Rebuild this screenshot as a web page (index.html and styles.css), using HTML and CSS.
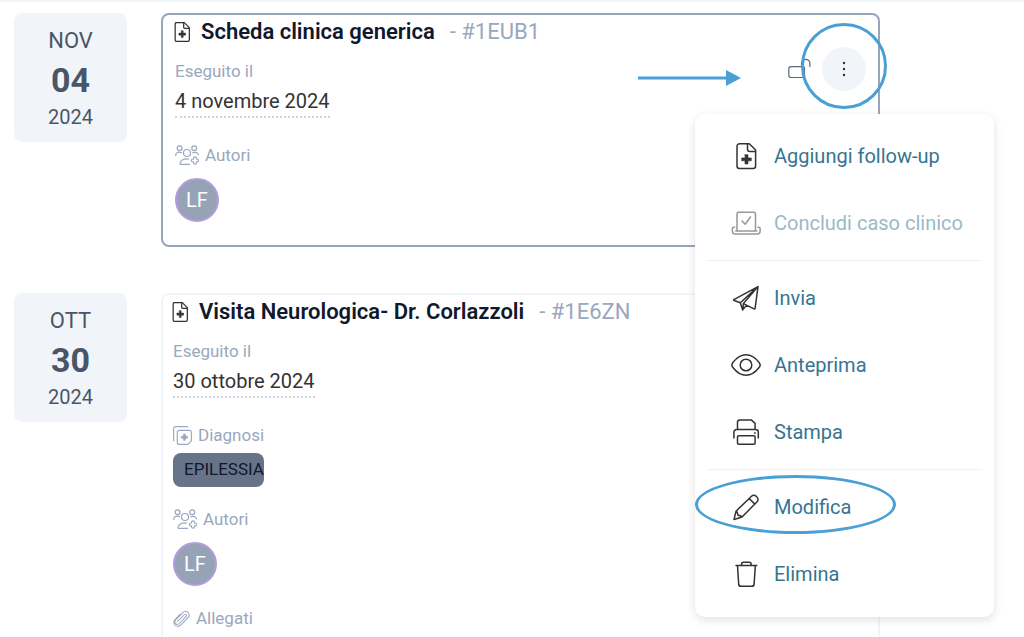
FILE: index.html
```html
<!DOCTYPE html>
<html lang="it">
<head>
<meta charset="utf-8">
<title>Schede cliniche</title>
<link rel="stylesheet" href="styles.css">
</head>
<body>
<svg class="sprite" aria-hidden="true">
  <symbol id="file-plus" viewBox="0 0 24 24">
    <path d="M3.8 2.3A1.6 1.6 0 0 1 5.4.7h9.4l6 6v15a1.6 1.6 0 0 1-1.6 1.600H5.400a1.600 1.600 0 0 1-1.600-1.600z"/>
    <path d="M14 .8v5.400a1.300 1.300 0 0 0 1.300 1.300h5.400"/>
    <path class="solid" d="M11.200 10.400h2.200v2.900h2.900v2.500h-2.900v2.900h-2.200v-2.900H8.300v-2.500h2.900z"/>
  </symbol>
  <symbol id="users-plus" viewBox="0 0 24 20">
    <circle cx="4.600" cy="3.200" r="2.400"/><circle cx="19.200" cy="3.200" r="2.400"/><circle cx="12" cy="8" r="3.500"/>
    <path d="M.6 10.400c0-3 3-4 6-2.600M23.400 9.700c-.6-2.300-3.300-3-5.700-1.900M14.500 19.300H5.600c-.5 0-.6-.3-.5-.8.6-4 4.500-5.400 8.400-4.300"/>
    <path d="M18.500 13.300a1.500 1.500 0 0 1 3 0v.7h.6a1.400 1.400 0 0 1 0 2.900h-.6v.8a1.500 1.500 0 0 1-3 0v-.8h-.6a1.400 1.400 0 0 1 0-2.900h.6z"/>
  </symbol>
  <symbol id="diagnosis" viewBox="0 0 20 20">
    <path d="M.7 15.500V2.700a2 2 0 0 1 2-2h12.800"/>
    <path d="M6.500 4.600h10.800a2 2 0 0 1 2 2v9l-3.700 3.700H6.500a2 2 0 0 1-2-2V6.600a2 2 0 0 1 2-2z"/>
    <path class="solid" d="M11 8.500h2v2.300h2.300v2H13v2.300h-2v-2.300H8.700v-2H11z"/>
  </symbol>
  <symbol id="clip" viewBox="0 0 20 20">
    <path d="M5.400 13.500l7.800-7.900a1.500 1.500 0 0 1 2.200 2.200l-8 8.100a3 3 0 0 1-4.300-4.200l8.400-8.700a4.200 4.200 0 0 1 6.100 5.900l-7.900 8.200a6 6 0 0 1-3.400 1.900c-3.500.6-6-2.400-5.100-5.700.3-1.100.9-1.900 1.700-2.700l5.200-5.400"/>
  </symbol>
</svg>

<main class="page">
  <section class="entry">
    <time class="date" datetime="2024-11-04"><span class="month">NOV</span><strong class="day">04</strong><span class="year">2024</span></time>
    <article class="card card-active">
      <div class="content">
        <h2 class="title"><svg class="icon title-icon"><use href="#file-plus"/></svg>Scheda clinica generica <span class="code">- #1EUB1</span></h2>
        <div class="label">Eseguito il</div>
        <div class="value">4 novembre 2024</div>
        <div class="label group"><svg class="icon users-icon"><use href="#users-plus"/></svg>Autori</div>
        <div class="avatar">LF</div>
      </div>
      <div class="actions">
        <svg class="icon lock" viewBox="0 0 24 24"><path d="M15 9.600H3A2.200 2.200 0 0 0 .8 11.800v6.500a2.200 2.200 0 0 0 2.200 2.200h12a1.500 1.500 0 0 0 1.500-1.500v-8a1.500 1.500 0 0 0-1.500-1.400z"/><path d="M13.500 9.500V6.500a4.200 4.200 0 0 1 8.400 0v3"/></svg>
        <button class="more" type="button" aria-label="Altre azioni"><svg class="dots" viewBox="0 0 4 16"><circle cx="2" cy="2" r="1.200"/><circle cx="2" cy="8" r="1.200"/><circle cx="2" cy="14" r="1.200"/></svg></button>
        <svg class="arrow" viewBox="0 0 103 16"><path d="M0 6.500h88V0l15 8-15 8V9.500H0z"/></svg>
        <span class="ring"></span>
        <nav class="menu">
          <button class="item" type="button"><svg class="icon" viewBox="0 0 30 30"><path d="M6 5.200A2.500 2.500 0 0 1 8.500 2.700h9.800l6.300 6.300v16a2.500 2.500 0 0 1-2.500 2.500H8.500A2.500 2.500 0 0 1 6 25z"/><path d="M16.500 2.900v5.400a2.300 2.300 0 0 0 2.300 2.300h5.700"/><path class="solid" d="M14 13.700h3v3.200h3.300v2.900H17V23h-3v-3.200h-3.300v-2.900H14z"/></svg>Aggiungi follow-up</button>
          <button class="item" type="button" disabled><svg class="icon" viewBox="0 0 30 30"><path d="M6 23V6.300a2 2 0 0 1 2-2h14.500a2 2 0 0 1 2 2V23M4.700 23h21.100M3.500 19.200H2.700a1.300 1.300 0 0 0-1.300 1.300v2.700a2.700 2.700 0 0 0 2.700 2.700h22.300a2.700 2.700 0 0 0 2.700-2.700v-2.700a1.300 1.300 0 0 0-1.300-1.300h-.8M11 13l3.200 3.300L19.500 9"/></svg>Concludi caso clinico</button>
          <hr class="divider">
          <button class="item" type="button"><svg class="icon" viewBox="0 0 30 30"><path d="M27 3.600L3.300 16.300a.6.600 0 0 0 0 1.200l6 2.200L27 3.600l-14.600 17L23 25.900a.8.800 0 0 0 1.100-.6L27 3.600M9.300 19.700l2.400 7.200 3.800-4.700M12.400 20.600l-.7 6.300"/></svg>Invia</button>
          <button class="item" type="button"><svg class="icon" viewBox="0 0 30 30"><path d="M15 4.700c5.200 0 9.900 3.700 12.900 7.500a4.200 4.200 0 0 1 0 5.600C24.900 21.600 20.200 25.300 15 25.300S5.100 21.600 2.100 17.800a4.200 4.200 0 0 1 0-5.600C5.100 8.400 9.800 4.700 15 4.700z"/><circle cx="15" cy="15" r="5.800"/></svg>Anteprima</button>
          <button class="item" type="button"><svg class="icon" viewBox="0 0 30 30"><path d="M6.500 12.500V5.200a2.300 2.300 0 0 1 2.300-2.300h11.500l3.800 3.500v6.100M2.900 21v-5.700a2.700 2.700 0 0 1 2.700-2.700h19a2.700 2.700 0 0 1 2.700 2.700V21M7.700 18.800h15.200a1.200 1.200 0 0 1 1.200 1.200v6a1.200 1.200 0 0 1-1.200 1.200H7.700A1.200 1.200 0 0 1 6.500 26v-6a1.200 1.200 0 0 1 1.200-1.200z"/><circle class="solid" cx="23.700" cy="16" r=".6"/></svg>Stampa</button>
          <hr class="divider">
          <button class="item" type="button"><svg class="icon" viewBox="0 0 30 30"><path d="M20.500 4.200a3.200 3.200 0 0 1 4.600 0l1 1a3.200 3.200 0 0 1 0 4.600L11 25l-8 2.500 2-8.300zM18.200 6.500l5.600 5.600M5 19.200l1.200 1 .8 3 3 .8 1 1"/></svg>Modifica<span class="oval"></span></button>
          <button class="item" type="button"><svg class="icon" viewBox="0 0 30 30"><path d="M5 6.600h20.800M10.600 6.500V5.300a2 2 0 0 1 2-2h5.600a2 2 0 0 1 2 2v1.200M6.500 6.800l1.200 18.300a2.300 2.300 0 0 0 2.300 2.200h10.800a2.300 2.300 0 0 0 2.300-2.200l1.200-18.300"/></svg>Elimina</button>
        </nav>
      </div>
    </article>
  </section>

  <section class="entry">
    <time class="date" datetime="2024-10-30"><span class="month">OTT</span><strong class="day">30</strong><span class="year">2024</span></time>
    <article class="card">
      <div class="content">
        <h2 class="title"><svg class="icon title-icon"><use href="#file-plus"/></svg>Visita Neurologica- Dr. Corlazzoli <span class="code">- #1E6ZN</span></h2>
        <div class="label">Eseguito il</div>
        <div class="value">30 ottobre 2024</div>
        <div class="label group"><svg class="icon small-icon"><use href="#diagnosis"/></svg>Diagnosi</div>
        <div class="chip">EPILESSIA</div>
        <div class="label group"><svg class="icon users-icon"><use href="#users-plus"/></svg>Autori</div>
        <div class="avatar">LF</div>
        <div class="label group"><svg class="icon clip-icon"><use href="#clip"/></svg>Allegati</div>
      </div>
    </article>
  </section>
</main>
</body>
</html>
```
FILE: styles.css
```css
* { box-sizing: border-box; }

body {
  margin: 0;
  background: #fff;
  color: #333;
  font-family: Roboto, "Liberation Sans", sans-serif;
  font-size: 20px;
}

.sprite { position: absolute; width: 0; height: 0; }

.page {
  display: flex;
  flex-direction: column;
  gap: 46px;
  height: 100vh;
  overflow: hidden;
  padding: 11px 144px 0 14px;
  border-top: 2px solid #f1f5fa;
}

.entry {
  display: grid;
  grid-template-columns: 113px minmax(0, 1fr);
  gap: 34px;
  align-items: start;
}

.date {
  display: flex;
  flex-direction: column;
  align-items: center;
  padding: 12px 0 11px;
  border-radius: 8px;
  background: #f1f5fa;
  color: #4a5568;
}
.month { font-size: 22px; line-height: 32px; }
.day { font-size: 34px; line-height: 46px; }
.year { font-size: 20px; line-height: 28px; }

.card {
  display: flex;
  justify-content: space-between;
  padding: 1px 12px 23px 10px;
  border: 2px solid #f1f5fa;
  border-radius: 8px;
}
.card-active { padding-left: 12px; border-color: #98a5bb; }

.content { min-width: 0; }

.icon {
  flex: none;
  fill: none;
  stroke: currentColor;
  stroke-width: 1.5;
  stroke-linecap: round;
  stroke-linejoin: round;
}
.solid { fill: currentColor; stroke-width: 0.6; }

.title {
  display: flex;
  align-items: center;
  gap: 11px;
  margin: 0 0 11px;
  color: #10182c;
  font-size: 22px;
  font-weight: 600;
  line-height: 32px;
}
.title-icon { width: 20px; height: 20px; margin: 0 -2px 0 -3px; color: #333; }
.code { margin-left: 4px; color: #9aa7bd; font-weight: 400; }

.label {
  display: flex;
  align-items: center;
  color: #9aa7bd;
  font-size: 17px;
  line-height: 24px;
}
.group { gap: 6px; margin: 20px 0 6px; }
.users-icon { width: 24px; height: 20px; stroke-width: 1.2; }
.small-icon { width: 19px; height: 19px; stroke-width: 1.2; }
.clip-icon { width: 17px; height: 19px; stroke-width: 1.2; }

.value {
  width: fit-content;
  margin: 3px 0 25px;
  border-bottom: 2px dotted #cbd3e4;
  line-height: 30px;
}

.avatar {
  display: grid;
  place-items: center;
  width: 44px;
  height: 44px;
  margin-top: 11px;
  border: 2px solid #b49cdc;
  border-radius: 50%;
  background: #96a3b7;
  color: #fff;
}

.chip {
  width: 91px;
  overflow: hidden;
  padding: 0 0 2px 11px;
  border-radius: 8px;
  background: #677389;
  color: #10182c;
  font-size: 17px;
  line-height: 32px;
}

.actions {
  position: relative;
  display: flex;
  flex: none;
  align-self: flex-start;
  align-items: center;
  gap: 10px;
  margin-top: 31px;
}
.lock { width: 24px; height: 24px; color: #5b677b; stroke-width: 1.2; }

.more {
  display: grid;
  place-items: center;
  width: 44px;
  height: 44px;
  padding: 0;
  border: 0;
  border-radius: 50%;
  background: #f1f5fa;
}
.dots { width: 4px; height: 16px; fill: #333; }

.ring, .oval {
  position: absolute;
  border: 3px solid #4a9fd5;
  border-radius: 50%;
  pointer-events: none;
}
.ring { top: -24px; right: -21px; width: 86px; height: 86px; }
.oval { top: 2px; left: 0; width: 201px; height: 59px; }

.arrow {
  position: absolute;
  top: 23px;
  right: 125px;
  width: 103px;
  height: 16px;
  fill: #4a9fd5;
}

.menu {
  position: absolute;
  z-index: 1;
  top: 67px;
  right: -128px;
  width: 299px;
  padding: 8px 0 10px;
  border-radius: 10px;
  background: #fff;
  box-shadow: 0 3px 10px rgba(0, 0, 0, 0.12);
}

.item {
  position: relative;
  display: flex;
  align-items: center;
  gap: 13px;
  width: 100%;
  height: 67px;
  padding: 0 0 0 36px;
  border: 0;
  background: none;
  color: #367592;
  font: inherit;
  text-align: left;
}
.item .icon { width: 30px; height: 30px; stroke: #333; color: #333; }
.item:disabled { opacity: 0.5; }

.divider {
  height: 1px;
  margin: 4px 12px 3px;
  border: 0;
  background: #edf2f8;
}
```
